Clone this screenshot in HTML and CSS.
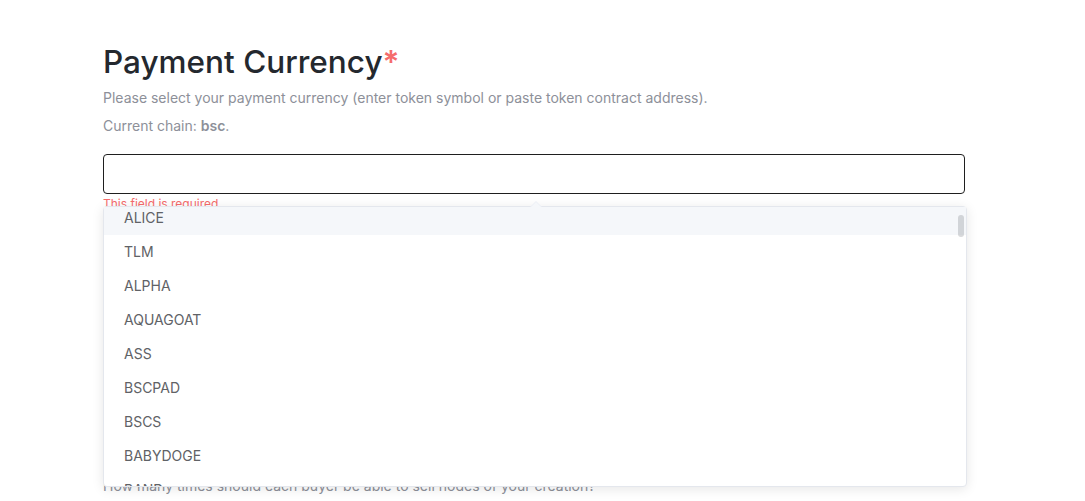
FILE: index.html
```html
<!DOCTYPE html>
<html lang="en">
<head>
    <meta charset="UTF-8">
    <meta name="viewport" content="width=device-width, initial-scale=1.0">
    <title>Payment Currency</title>
    <link rel="stylesheet" href="styles.css">
</head>
<body>
    <div class="page">
        <div class="form-item">
            <h2 class="title">Payment Currency<span class="required">*</span></h2>
            <p class="desc">Please select your payment currency (enter token symbol or paste token contract address).</p>
            <p class="desc">Current chain: <b>bsc</b>.</p>
            <div class="field">
                <input type="text" class="input">
                <div class="error">This field is required</div>

                <div class="suggestion">
                    <div class="arrow"></div>
                    <div class="suggestion-wrap">
                        <ul class="suggestion-list">
                            <li class="highlighted">ALICE</li>
                            <li>TLM</li>
                            <li>ALPHA</li>
                            <li>AQUAGOAT</li>
                            <li>ASS</li>
                            <li>BSCPAD</li>
                            <li>BSCS</li>
                            <li>BABYDOGE</li>
                            <li>BAND</li>
                            <li>BAKE</li>
                        </ul>
                        <div class="scroll-thumb"></div>
                    </div>
                </div>
            </div>
        </div>

        <div class="form-item next">
            <p class="desc">How many times should each buyer be able to sell nodes of your creation?</p>
        </div>
    </div>
</body>
</html>
```

FILE: styles.css
```css
body {
    margin: 0;
    font-family: Inter, 'Noto Sans', Arial, sans-serif;
    background: #fff;
    color: #24292f;
}
.page {
    width: 862px;
    padding: 40px 0 0 103px;
}
.title {
    margin: 0;
    font-size: 31.5px;
    font-weight: 500;
    line-height: 44px;
    color: #24282e;
}
.required {
    color: #f56c6c;
    font-weight: 600;
}
.desc {
    margin: 0;
    font-size: 14px;
    line-height: 28px;
    color: #8d9099;
}
.desc b {
    font-weight: 600;
}
.field {
    position: relative;
    margin-top: 14px;
}
.input {
    display: block;
    box-sizing: border-box;
    width: 100%;
    height: 40px;
    border: 1px solid #1f1f1f;
    border-radius: 4px;
    padding: 0 15px;
    font-size: 14px;
    font-family: inherit;
    outline: none;
}
.error {
    font-size: 12px;
    line-height: 18px;
    padding-top: 1px;
    color: #f56c6c;
}
.suggestion {
    position: absolute;
    top: 52px;
    left: 0;
    width: 864px;
    box-sizing: border-box;
    background: #fff;
    border: 1px solid #e4e7ed;
    border-radius: 4px;
    box-shadow: 0 2px 12px rgba(0, 0, 0, 0.1);
    z-index: 10;
}
.arrow {
    position: absolute;
    top: -6px;
    left: 426px;
    width: 0;
    height: 0;
    border-left: 6px solid transparent;
    border-right: 6px solid transparent;
    border-bottom: 6px solid #ebeef5;
}
.arrow::after {
    content: '';
    position: absolute;
    top: 1px;
    left: -6px;
    border-left: 6px solid transparent;
    border-right: 6px solid transparent;
    border-bottom: 6px solid #f5f7fa;
}
.suggestion-wrap {
    position: relative;
    height: 279px;
    overflow: hidden;
}
.suggestion-list {
    list-style: none;
    margin: -6px 0 0;
    padding: 0;
}
.suggestion-list li {
    padding: 0 20px;
    line-height: 34px;
    font-size: 14px;
    color: #606266;
}
.suggestion-list li.highlighted {
    background: #f5f7fa;
}
.scroll-thumb {
    position: absolute;
    top: 8px;
    right: 2px;
    width: 6px;
    height: 22px;
    border-radius: 3px;
    background: rgba(144, 147, 153, 0.35);
}
.next {
    margin-top: 259px;
}
```
